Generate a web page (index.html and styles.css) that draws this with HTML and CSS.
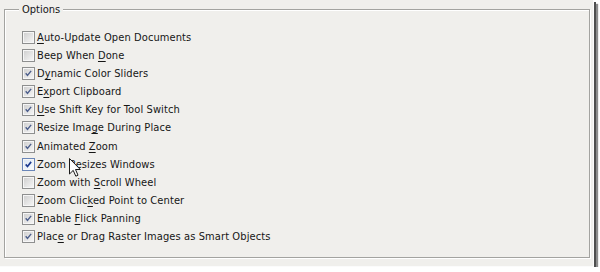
FILE: index.html
```html
<!DOCTYPE html>
<html>
<head>
<meta charset="utf-8">
<link rel="stylesheet" href="styles.css">
</head>
<body>
<div class="shot">
  <div class="group">
    <span class="legend">Options</span>
    <ul class="opts">
      <li class="opt"><span class="box"></span><span class="label"><u>A</u>uto-Update Open Documents</span></li>
      <li class="opt"><span class="box"></span><span class="label">Beep When <u>D</u>one</span></li>
      <li class="opt"><span class="box on"><svg viewBox="0 0 13 13"><path d="M3.2 6.3 L5.3 8.8 L9.6 3.4"/></svg></span><span class="label">D<u>y</u>namic Color Sliders</span></li>
      <li class="opt"><span class="box on"><svg viewBox="0 0 13 13"><path d="M3.2 6.3 L5.3 8.8 L9.6 3.4"/></svg></span><span class="label">E<u>x</u>port Clipboard</span></li>
      <li class="opt"><span class="box on"><svg viewBox="0 0 13 13"><path d="M3.2 6.3 L5.3 8.8 L9.6 3.4"/></svg></span><span class="label"><u>U</u>se Shift Key for Tool Switch</span></li>
      <li class="opt"><span class="box on"><svg viewBox="0 0 13 13"><path d="M3.2 6.3 L5.3 8.8 L9.6 3.4"/></svg></span><span class="label">Resize Ima<u>g</u>e During Place</span></li>
      <li class="opt"><span class="box on"><svg viewBox="0 0 13 13"><path d="M3.2 6.3 L5.3 8.8 L9.6 3.4"/></svg></span><span class="label">Animated <u>Z</u>oom</span></li>
      <li class="opt"><span class="box on hot"><svg viewBox="0 0 13 13"><path d="M3.2 6.3 L5.3 8.8 L9.6 3.4"/></svg></span><span class="label">Zoom <u>R</u>esizes Windows</span></li>
      <li class="opt"><span class="box"></span><span class="label">Zoom with <u>S</u>croll Wheel</span></li>
      <li class="opt"><span class="box"></span><span class="label">Zoom Clic<u>k</u>ed Point to Center</span></li>
      <li class="opt"><span class="box on"><svg viewBox="0 0 13 13"><path d="M3.2 6.3 L5.3 8.8 L9.6 3.4"/></svg></span><span class="label">Enable <u>F</u>lick Panning</span></li>
      <li class="opt"><span class="box on"><svg viewBox="0 0 13 13"><path d="M3.2 6.3 L5.3 8.8 L9.6 3.4"/></svg></span><span class="label">Plac<u>e</u> or Drag Raster Images as Smart Objects</span></li>
    </ul>
  </div>
  <svg class="cursor" viewBox="0 0 12 19" width="12" height="19"><path d="M0.5 0.5 L0.5 16 L4.2 12.4 L6.8 18.2 L9 17.2 L6.5 11.5 L11.3 11.5 Z"/></svg>
</div>
</body>
</html>
```
FILE: styles.css
```css
html, body {
  margin: 0;
  padding: 0;
  background: #ffffff;
}
.shot {
  position: relative;
  width: 594px;
  height: 267px;
  box-sizing: border-box;
  padding: 9px 0 0 4px;
  background: #f0efec;
  box-shadow: inset -1px -1px 0 #fbfbfb, 2px 2px 0 #4e4e4e, 4px 4px 1px #8c8c8c;
  font-family: "DejaVu Sans Condensed", "DejaVu Sans", sans-serif;
  font-size: 11px;
  color: #161616;
}
.group {
  position: relative;
  width: 586px;
  height: 249px;
  box-sizing: border-box;
  border: 1px solid #a3a3a0;
  box-shadow: inset 1px 1px 0 #ffffff, 1px 1px 0 #ffffff;
  padding: 18px 0 0 17px;
}
.legend {
  position: absolute;
  top: -8px;
  left: 14px;
  padding: 0 3px;
  line-height: 15px;
  background: #f0efec;
}
.opts {
  list-style: none;
  margin: 0;
  padding: 0;
  display: grid;
  grid-auto-rows: 18.18px;
}
.opt {
  display: flex;
  align-items: center;
  gap: 2px;
}
.label {
  letter-spacing: 0.1px;
}
.box {
  width: 13px;
  height: 13px;
  box-sizing: border-box;
  border: 1px solid #8e8f8f;
  box-shadow: inset 0 0 0 1px #f6f6f6;
  background: linear-gradient(135deg, #cdcdcd, #f8f8f8);
  display: flex;
}
.box svg {
  width: 11px;
  height: 11px;
}
.box svg path {
  fill: none;
  stroke: #4d5f8c;
  stroke-width: 1.7;
}
.box.hot {
  border-color: #6a86b8;
  background: linear-gradient(135deg, #d8e4f2, #fbfdff);
}
.box.hot svg path {
  stroke: #1d3a8f;
  stroke-width: 2;
}
.label u {
  text-decoration-thickness: 1px;
  text-underline-offset: 2px;
}
.cursor {
  position: absolute;
  left: 69px;
  top: 158px;
}
.cursor path {
  fill: #ffffff;
  stroke: #1a1a1a;
  stroke-width: 1;
  stroke-linejoin: miter;
}
```
